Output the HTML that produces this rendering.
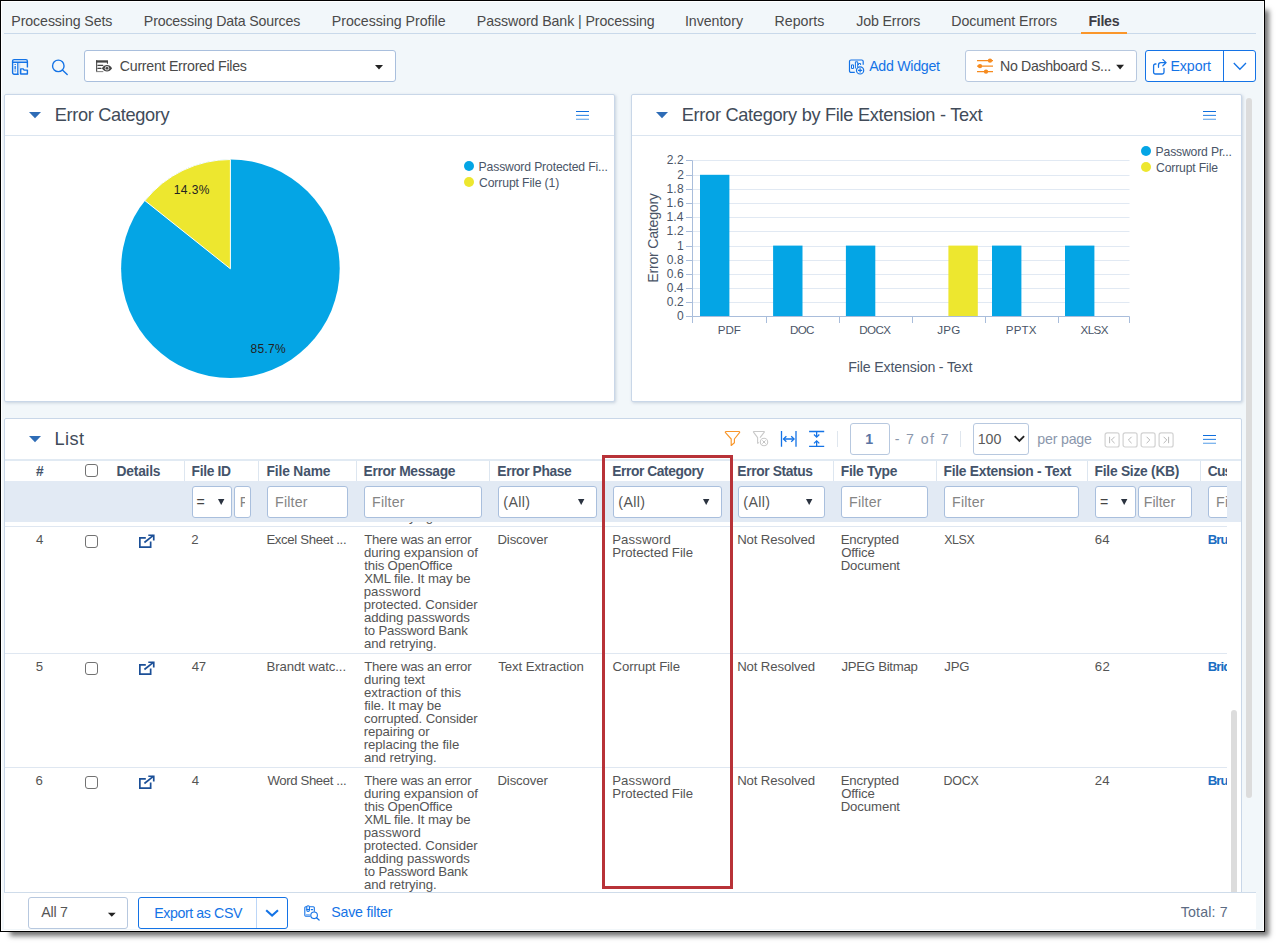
<!DOCTYPE html>
<html lang="en"><head><meta charset="utf-8"><title>Files</title>
<style>
html,body{margin:0;padding:0;background:#fff}
body{width:1280px;height:947px;position:relative;overflow:hidden;font-family:"Liberation Sans",Arial,sans-serif}
#frame{position:absolute;left:0;top:0;width:1263px;height:930px;border:1px solid #000;background:#fff;box-shadow:7px 7px 5px -3px rgba(0,0,0,.55)}
#app{position:absolute;left:1px;top:1px;width:1261px;height:928px;background:#f2f7fa;overflow:hidden}
#pg{position:absolute;left:-2px;top:-2px;width:1280px;height:947px}
.t{position:absolute;white-space:nowrap;display:block;line-height:20px}
.b{position:absolute;box-sizing:border-box;display:block}
.clip{position:absolute;overflow:hidden}
</style></head><body>
<div id="frame"><div id="app"><div id="pg">
<div class="b" style="left:4px;top:33px;width:1252px;height:1px;background:#c9d9ea"></div>
<span class="t " style="left:11.34px;top:11px;font-size:14.2px;color:#4a4a4a;letter-spacing:-0.102px;">Processing Sets</span>
<span class="t " style="left:143.84px;top:11px;font-size:14.2px;color:#4a4a4a;letter-spacing:-0.161px;">Processing Data Sources</span>
<span class="t " style="left:331.84px;top:11px;font-size:14.2px;color:#4a4a4a;letter-spacing:-0.038px;">Processing Profile</span>
<span class="t " style="left:476.84px;top:11px;font-size:14.2px;color:#4a4a4a;letter-spacing:-0.096px;">Password Bank | Processing</span>
<span class="t " style="left:684.94px;top:11px;font-size:14.2px;color:#4a4a4a;letter-spacing:-0.040px;">Inventory</span>
<span class="t " style="left:774.59px;top:11px;font-size:14.2px;color:#4a4a4a;letter-spacing:-0.006px;">Reports</span>
<span class="t " style="left:856.29px;top:11px;font-size:14.2px;color:#4a4a4a;letter-spacing:-0.141px;">Job Errors</span>
<span class="t " style="left:951.34px;top:11px;font-size:14.2px;color:#4a4a4a;letter-spacing:-0.100px;">Document Errors</span>
<span class="t " style="left:1088.56px;top:11px;font-size:14.2px;color:#3d3d45;font-weight:700;letter-spacing:-0.339px;">Files</span>
<div class="b" style="left:1081px;top:32px;width:46px;height:2px;background:#fa962a"></div>
<svg class="b" style="left:11px;top:58px;" width="18" height="18" viewBox="0 0 18 18"><g fill="none" stroke="#1473e6" stroke-width="1.400">
<path d="M7.700 16.250H3.100a1.500 1.500 0 0 1-1.500-1.500V3.150a1.500 1.500 0 0 1 1.500-1.500H14.900a1.500 1.500 0 0 1 1.500 1.500V9.600"/>
<path d="M1.600 4.300H16.400M6.900 4.300V16.250"/>
<rect x="7.600" y="5" width="1.800" height="11" fill="#cfe0f6" stroke="none"/>
<path d="M4.200 5.900v1M4.200 8v3.400M4.200 12.400v1" stroke-width="1.500" stroke="#3b89ea"/>
<path d="M9.700 16.050V10.900h2.500l.9 1.200h3.300v3.950z" fill="#f2f7fa" stroke-linejoin="round"/></g></svg>
<svg class="b" style="left:51px;top:58px;" width="18" height="18" viewBox="0 0 18 18"><g fill="none" stroke="#1473e6" stroke-width="1.400" stroke-linecap="round"><circle cx="7.300" cy="7.900" r="5.750"/><path d="M11.400 12l4.800 4.500"/></g></svg>
<div class="b" style="left:84px;top:50px;width:312px;height:32px;background:#fff;border:1px solid #a9bfdd;border-radius:3px"></div>
<svg class="b" style="left:95px;top:59px;" width="19" height="15" viewBox="0 0 19 15"><g fill="none" stroke="#444" stroke-width="1.100">
<path d="M1.100 2.450H13" stroke-width="2.300"/><path d="M12.450 2.400V4.700"/>
<path d="M1.650 1.300V12.900"/><path d="M1.100 12.600H8.300" stroke="#8a8a8a"/>
<path d="M2.900 6.400H7.800M2.900 9.400H6" stroke-linecap="round"/>
<path d="M6.900 9.300C8.400 7.100 10 6 12 6s3.600 1.100 5.100 3.300C15.600 11.500 14 12.600 12 12.600S8.400 11.500 6.900 9.300z" fill="#444" stroke="none"/>
<circle cx="12" cy="9.300" r="2.300" fill="#d8d8d8" stroke="none"/><circle cx="12" cy="9.300" r="1.300" fill="#444" stroke="none"/></g></svg>
<span class="t " style="left:119.79px;top:56px;font-size:14.2px;color:#4a4a4a;letter-spacing:-0.267px;">Current Errored Files</span>
<svg class="b" style="left:374px;top:64px;" width="10" height="6" viewBox="0 0 10 6"><path d="M1 1h8L5 5.600z" fill="#222"/></svg>
<svg class="b" style="left:848px;top:58px;" width="18" height="18" viewBox="0 0 18 18"><g fill="none" stroke="#1473e6" stroke-width="1.200">
<path d="M6.800 14.400H3A1.500 1.500 0 0 1 1.500 12.900V3.500A1.500 1.500 0 0 1 3 2H13.700A1.500 1.500 0 0 1 15.200 3.500V6.800"/>
<path d="M3.500 10.500V6.900h2v3.600zM7.400 10.500V3.800h2.300v5.400M10.500 7V5.500h2.100V7" stroke-width="1"/>
<circle cx="12.100" cy="12.400" r="3.600" fill="#f2f7fa"/><path d="M12.100 10.300v4.200M10 12.400h4.200"/></g></svg>
<span class="t " style="left:869.17px;top:56px;font-size:14.2px;color:#1473e6;letter-spacing:-0.276px;">Add Widget</span>
<div class="b" style="left:965px;top:50px;width:172px;height:32px;background:#fff;border:1px solid #b7c8df;border-radius:3px"></div>
<svg class="b" style="left:976px;top:57px;" width="18" height="18" viewBox="0 0 18 18"><g stroke="#f68b1f" stroke-width="1.300" fill="#f68b1f"><path d="M1 3.600h16M1 9.100h16M1 14.600h16"/>
<circle cx="14" cy="3.600" r="2.200" stroke="none"/><circle cx="4" cy="9.100" r="2.200" stroke="none"/><circle cx="10" cy="14.600" r="2.200" stroke="none"/></g></svg>
<span class="t " style="left:1000.04px;top:56px;font-size:14.2px;color:#4a4a4a;letter-spacing:-0.348px;">No Dashboard S...</span>
<svg class="b" style="left:1115px;top:64px;" width="10" height="6" viewBox="0 0 10 6"><path d="M1.200 0.800h7.800L5.100 5.500z" fill="#222"/></svg>
<div class="b" style="left:1145px;top:50px;width:111px;height:32px;background:#fff;border:1px solid #1473e6;border-radius:3px"></div>
<div class="b" style="left:1223px;top:50px;width:1px;height:32px;background:#1473e6"></div>
<svg class="b" style="left:1151px;top:58px;" width="17" height="18" viewBox="0 0 17 18"><g fill="none" stroke="#1473e6" stroke-width="1.300" stroke-linecap="round" stroke-linejoin="round">
<path d="M5 6H4.400A1.800 1.800 0 0 0 2.600 7.800V14.200A1.800 1.800 0 0 0 4.400 16H11.200A1.800 1.800 0 0 0 13 14.200V10.400"/>
<path d="M7.500 9.300V7A2.400 2.400 0 0 1 9.900 4.600H14.800M11.900 1.600l3.200 3-3.200 3.100"/></g></svg>
<span class="t " style="left:1170.44px;top:56px;font-size:14.2px;color:#1473e6;letter-spacing:-0.075px;">Export</span>
<svg class="b" style="left:1232px;top:61px;" width="16" height="10" viewBox="0 0 16 10"><path d="M1.800 2l6.100 6.300L14 2" fill="none" stroke="#1473e6" stroke-width="1.300"/></svg>
<div class="b" style="left:4px;top:94px;width:611px;height:308px;background:#fff;border:1px solid #c9d7e8;border-radius:2px;box-shadow:1px 1px 3px rgba(120,140,170,.35)"></div>
<div class="b" style="left:631px;top:94px;width:611px;height:308px;background:#fff;border:1px solid #c9d7e8;border-radius:2px;box-shadow:1px 1px 3px rgba(120,140,170,.35)"></div>
<div class="b" style="left:5px;top:135px;width:609px;height:1px;background:#dbe5f0"></div>
<div class="b" style="left:632px;top:135px;width:609px;height:1px;background:#dbe5f0"></div>
<svg class="b" style="left:29px;top:112px;" width="12" height="7" viewBox="0 0 12 7"><path d="M0 0h12L6 6.200z" fill="#2e6cb6"/></svg>
<svg class="b" style="left:656px;top:112px;" width="12" height="7" viewBox="0 0 12 7"><path d="M0 0h12L6 6.200z" fill="#2e6cb6"/></svg>
<span class="t " style="left:54.71px;top:105px;font-size:18.2px;color:#414b59;letter-spacing:-0.333px;">Error Category</span>
<span class="t " style="left:681.71px;top:105px;font-size:18.2px;color:#414b59;letter-spacing:-0.292px;">Error Category by File Extension - Text</span>
<svg class="b" style="left:576px;top:111px;" width="13" height="9" viewBox="0 0 13 9"><g shape-rendering="crispEdges"><rect x="0" y="0" width="13" height="1" fill="#0f6edd"/><rect x="0" y="3" width="13" height="1" fill="#e3eefb"/><rect x="0" y="4" width="13" height="1" fill="#3f8fe6"/><rect x="0" y="7" width="13" height="1" fill="#d3e5f8"/><rect x="0" y="8" width="13" height="1" fill="#7fb6ee"/></g></svg>
<svg class="b" style="left:1203px;top:111px;" width="13" height="9" viewBox="0 0 13 9"><g shape-rendering="crispEdges"><rect x="0" y="0" width="13" height="1" fill="#0f6edd"/><rect x="0" y="3" width="13" height="1" fill="#e3eefb"/><rect x="0" y="4" width="13" height="1" fill="#3f8fe6"/><rect x="0" y="7" width="13" height="1" fill="#d3e5f8"/><rect x="0" y="8" width="13" height="1" fill="#7fb6ee"/></g></svg>
<svg class="b" style="left:0;top:0" width="620" height="410" viewBox="0 0 620 410"><circle cx="230.4" cy="268.8" r="109.3" fill="#04a5e5"/><path d="M230.4 268.8L230.4 159.5A109.3 109.3 0 0 0 144.95 200.65Z" fill="#ede72f" stroke="#fff" stroke-width="1" stroke-linejoin="round"/></svg>
<span class="t " style="left:173.79px;top:180px;font-size:12px;color:#222;letter-spacing:0.403px;">14.3%</span>
<span class="t " style="left:250.48px;top:339px;font-size:12px;color:#222;letter-spacing:0.304px;">85.7%</span>
<div class="b" style="left:464px;top:161px;width:10px;height:10px;background:#04a5e5;border-radius:50%"></div>
<div class="b" style="left:464px;top:177px;width:10px;height:10px;background:#ede72f;border-radius:50%"></div>
<span class="t " style="left:478.60px;top:157px;font-size:12.2px;color:#4a5567;letter-spacing:-0.151px;">Password Protected Fi...</span>
<span class="t " style="left:478.99px;top:173px;font-size:12.2px;color:#4a5567;letter-spacing:-0.111px;">Corrupt File (1)</span>
<svg class="b" style="left:0;top:0" width="1245" height="410" viewBox="0 0 1245 410"><path d="M692.5 302.5H1129.5" stroke="#e1e9f3" stroke-width="1"/><path d="M692.5 288.5H1129.5" stroke="#e1e9f3" stroke-width="1"/><path d="M692.5 274.5H1129.5" stroke="#e1e9f3" stroke-width="1"/><path d="M692.5 260.5H1129.5" stroke="#e1e9f3" stroke-width="1"/><path d="M692.5 246.5H1129.5" stroke="#e1e9f3" stroke-width="1"/><path d="M692.5 231.5H1129.5" stroke="#e1e9f3" stroke-width="1"/><path d="M692.5 217.5H1129.5" stroke="#e1e9f3" stroke-width="1"/><path d="M692.5 203.5H1129.5" stroke="#e1e9f3" stroke-width="1"/><path d="M692.5 189.5H1129.5" stroke="#e1e9f3" stroke-width="1"/><path d="M692.5 175.5H1129.5" stroke="#e1e9f3" stroke-width="1"/><path d="M692.5 160.5H1129.5" stroke="#e1e9f3" stroke-width="1"/><rect x="700.00" y="174.8" width="29.4" height="141.40" fill="#04a5e5"/><rect x="773.10" y="245.6" width="29.4" height="70.60" fill="#04a5e5"/><rect x="845.90" y="245.6" width="29.4" height="70.60" fill="#04a5e5"/><rect x="948.40" y="245.6" width="29.4" height="70.60" fill="#ede72f"/><rect x="992.00" y="245.6" width="29.4" height="70.60" fill="#04a5e5"/><rect x="1065.00" y="245.6" width="29.4" height="70.60" fill="#04a5e5"/><path d="M692.5 160.5V316.5H1129.5" fill="none" stroke="#a9bddb" stroke-width="1"/><path d="M686.0 316.5H692.5" stroke="#a9bddb" stroke-width="1"/><path d="M686.0 302.5H692.5" stroke="#a9bddb" stroke-width="1"/><path d="M686.0 288.5H692.5" stroke="#a9bddb" stroke-width="1"/><path d="M686.0 274.5H692.5" stroke="#a9bddb" stroke-width="1"/><path d="M686.0 260.5H692.5" stroke="#a9bddb" stroke-width="1"/><path d="M686.0 246.5H692.5" stroke="#a9bddb" stroke-width="1"/><path d="M686.0 231.5H692.5" stroke="#a9bddb" stroke-width="1"/><path d="M686.0 217.5H692.5" stroke="#a9bddb" stroke-width="1"/><path d="M686.0 203.5H692.5" stroke="#a9bddb" stroke-width="1"/><path d="M686.0 189.5H692.5" stroke="#a9bddb" stroke-width="1"/><path d="M686.0 175.5H692.5" stroke="#a9bddb" stroke-width="1"/><path d="M686.0 160.5H692.5" stroke="#a9bddb" stroke-width="1"/><path d="M692.50 316.5V323.0" stroke="#a9bddb" stroke-width="1"/><path d="M766.50 316.5V323.0" stroke="#a9bddb" stroke-width="1"/><path d="M839.50 316.5V323.0" stroke="#a9bddb" stroke-width="1"/><path d="M912.50 316.5V323.0" stroke="#a9bddb" stroke-width="1"/><path d="M985.50 316.5V323.0" stroke="#a9bddb" stroke-width="1"/><path d="M1058.50 316.5V323.0" stroke="#a9bddb" stroke-width="1"/><path d="M1129.50 316.5V323.0" stroke="#a9bddb" stroke-width="1"/></svg>
<span class="t " style="left:676.98px;top:306px;font-size:12px;color:#4a5567;">0</span>
<span class="t " style="left:666.83px;top:292px;font-size:12px;color:#4a5567;letter-spacing:0.144px;">0.2</span>
<span class="t " style="left:666.83px;top:278px;font-size:12px;color:#4a5567;letter-spacing:0.018px;">0.4</span>
<span class="t " style="left:666.83px;top:264px;font-size:12px;color:#4a5567;letter-spacing:0.102px;">0.6</span>
<span class="t " style="left:666.83px;top:250px;font-size:12px;color:#4a5567;letter-spacing:0.102px;">0.8</span>
<span class="t " style="left:677.10px;top:236px;font-size:12px;color:#4a5567;">1</span>
<span class="t " style="left:666.39px;top:221px;font-size:12px;color:#4a5567;letter-spacing:0.366px;">1.2</span>
<span class="t " style="left:666.39px;top:207px;font-size:12px;color:#4a5567;letter-spacing:0.240px;">1.4</span>
<span class="t " style="left:666.39px;top:193px;font-size:12px;color:#4a5567;letter-spacing:0.324px;">1.6</span>
<span class="t " style="left:666.39px;top:179px;font-size:12px;color:#4a5567;letter-spacing:0.324px;">1.8</span>
<span class="t " style="left:677.13px;top:165px;font-size:12px;color:#4a5567;">2</span>
<span class="t " style="left:666.70px;top:150px;font-size:12px;color:#4a5567;letter-spacing:0.210px;">2.2</span>
<span class="t " style="left:717.85px;top:320px;font-size:11.6px;color:#4a5567;letter-spacing:-0.092px;">PDF</span>
<span class="t " style="left:790.05px;top:320px;font-size:11.6px;color:#4a5567;letter-spacing:-0.697px;">DOC</span>
<span class="t " style="left:859.17px;top:320px;font-size:11.6px;color:#4a5567;letter-spacing:-0.523px;">DOCX</span>
<span class="t " style="left:937.33px;top:320px;font-size:11.6px;color:#4a5567;letter-spacing:0.235px;">JPG</span>
<span class="t " style="left:1005.80px;top:320px;font-size:11.6px;color:#4a5567;letter-spacing:0.132px;">PPTX</span>
<span class="t " style="left:1080.49px;top:320px;font-size:11.6px;color:#4a5567;letter-spacing:-0.554px;">XLSX</span>
<span class="t " style="left:848.34px;top:357px;font-size:14.2px;color:#4a5567;letter-spacing:-0.167px;">File Extension - Text</span>
<span class="t" style="left:652.8px;top:237.6px;font-size:14.2px;line-height:14.2px;color:#4a5567;letter-spacing:-0.263px;transform:translate(-50%,-50%) rotate(-90deg);transform-origin:50% 50%">Error Category</span>
<div class="b" style="left:1141px;top:146px;width:10px;height:10px;background:#04a5e5;border-radius:50%"></div>
<div class="b" style="left:1141px;top:162px;width:10px;height:10px;background:#ede72f;border-radius:50%"></div>
<span class="t " style="left:1155.60px;top:142px;font-size:12.2px;color:#4a5567;letter-spacing:-0.173px;">Password Pr...</span>
<span class="t " style="left:1155.99px;top:158px;font-size:12.2px;color:#4a5567;letter-spacing:-0.153px;">Corrupt File</span>
<div class="b" style="left:4px;top:418px;width:1238px;height:475px;background:#fff;border:1px solid #c9d7e8;border-radius:2px 2px 0 0"></div>
<svg class="b" style="left:29px;top:436px;" width="12" height="7" viewBox="0 0 12 7"><path d="M0 0h12L6 6.200z" fill="#2e6cb6"/></svg>
<span class="t " style="left:54.51px;top:429px;font-size:18.2px;color:#414b59;letter-spacing:0.434px;">List</span>
<svg class="b" style="left:723px;top:429px;" width="19" height="18" viewBox="0 0 19 18"><path d="M3 2.500H16A.7.700 0 0 1 16.500 3.700L11.400 10V13.700L8.200 16.500V10L2.500 3.700A.7.700 0 0 1 3 2.500Z" fill="none" stroke="#f8962a" stroke-width="1.150" stroke-linejoin="round"/></svg>
<svg class="b" style="left:751px;top:429px;" width="19" height="18" viewBox="0 0 19 18"><g fill="none" stroke="#c9c9c9" stroke-width="1.100" stroke-linejoin="round"><path d="M9 8.600L13.300 3.200A.45.450 0 0 0 13 2.500H2.800A.45.450 0 0 0 2.500 3.200L6.600 8.600V14.300L7.800 13.500"/>
<circle cx="13" cy="13" r="3.700" fill="#fff"/><path d="M11.400 11.400l3.200 3.200M14.600 11.400l-3.200 3.200" stroke-width=".9" stroke="#bdbdbd"/></g></svg>
<svg class="b" style="left:779px;top:429px;" width="19" height="19" viewBox="0 0 19 19"><g fill="none" stroke="#1473e6" stroke-width="1.300"><path d="M2.500 2V17.700M17 2V17.700M4.800 10H14.800"/><path d="M7.400 7.200L4.500 10l2.900 2.800M12.200 7.200l2.900 2.800-2.900 2.800"/></g></svg>
<svg class="b" style="left:808px;top:429px;" width="18" height="19" viewBox="0 0 18 19"><g fill="none" stroke="#1473e6" stroke-width="1.300"><path d="M1.100 2.500H16.200M1.100 17.400H16.200M8.650 2.500V7.800M8.650 17.400V12.100"/><path d="M6 5.500l2.650 2.600L11.300 5.500M6 14.400l2.650-2.600 2.650 2.600"/></g></svg>
<div class="b" style="left:837px;top:431px;width:1px;height:16px;background:#dfe6ee"></div>
<div class="b" style="left:850px;top:423px;width:40px;height:32px;background:#fff;border:1px solid #b7c8df;border-radius:3px"></div>
<span class="t " style="left:865.30px;top:429px;font-size:14.2px;color:#5a73a3;font-weight:700;">1</span>
<span class="t " style="left:894.68px;top:429px;font-size:14.2px;color:#8b97ac;letter-spacing:1.390px;">- 7 of 7</span>
<div class="b" style="left:960px;top:431px;width:1px;height:16px;background:#dfe6ee"></div>
<div class="b" style="left:973px;top:423px;width:56px;height:32px;background:#fff;border:1px solid #b7c8df;border-radius:3px"></div>
<span class="t " style="left:977.72px;top:429px;font-size:14.2px;color:#5a5a5a;letter-spacing:-0.033px;">100</span>
<svg class="b" style="left:1013px;top:434px;" width="13" height="10" viewBox="0 0 13 10"><path d="M1.700 2.200l4.700 4.700 4.700-4.700" fill="none" stroke="#222" stroke-width="1.900"/></svg>
<span class="t " style="left:1037.29px;top:429px;font-size:14.2px;color:#8b97ac;letter-spacing:-0.190px;">per page</span>
<svg class="b" style="left:1104px;top:432px;" width="16" height="16" viewBox="0 0 16 16"><rect x="1.100" y=".9" width="14" height="14.100" rx="2" fill="#fff" stroke="#d2d2d2" stroke-width="1.200"/><g fill="none" stroke="#b9b9b9" stroke-width="1" transform="translate(.6,.5)"><path d="M5 4.300V10.700M10 4.300L6.800 7.500l3.200 3.200"/></g></svg>
<svg class="b" style="left:1122px;top:432px;" width="16" height="16" viewBox="0 0 16 16"><rect x="1.100" y=".9" width="14" height="14.100" rx="2" fill="#fff" stroke="#d2d2d2" stroke-width="1.200"/><g fill="none" stroke="#b9b9b9" stroke-width="1" transform="translate(.6,.5)"><path d="M9 4.300L5.800 7.500 9 10.700"/></g></svg>
<svg class="b" style="left:1140px;top:432px;" width="16" height="16" viewBox="0 0 16 16"><rect x="1.100" y=".9" width="14" height="14.100" rx="2" fill="#fff" stroke="#d2d2d2" stroke-width="1.200"/><g fill="none" stroke="#b9b9b9" stroke-width="1" transform="translate(.6,.5)"><path d="M6 4.300l3.200 3.200L6 10.700"/></g></svg>
<svg class="b" style="left:1158px;top:432px;" width="16" height="16" viewBox="0 0 16 16"><rect x="1.100" y=".9" width="14" height="14.100" rx="2" fill="#fff" stroke="#d2d2d2" stroke-width="1.200"/><g fill="none" stroke="#b9b9b9" stroke-width="1" transform="translate(.6,.5)"><path d="M10 4.300V10.700M5 4.300l3.200 3.200L5 10.700"/></g></svg>
<svg class="b" style="left:1203px;top:435px;" width="13" height="9" viewBox="0 0 13 9"><g shape-rendering="crispEdges"><rect x="0" y="0" width="13" height="1" fill="#0f6edd"/><rect x="0" y="3" width="13" height="1" fill="#e3eefb"/><rect x="0" y="4" width="13" height="1" fill="#3f8fe6"/><rect x="0" y="7" width="13" height="1" fill="#d3e5f8"/><rect x="0" y="8" width="13" height="1" fill="#7fb6ee"/></g></svg>
<div class="b" style="left:5px;top:459px;width:1236px;height:2px;background:#e1eaf3"></div>
<div class="clip" style="left:5px;top:461px;width:1222px;height:61px">
<span class="t " style="left:31.02px;top:1px;font-size:13.8px;color:#44536a;font-weight:700;">#</span>
<div class="b" style="left:80px;top:3px;width:13px;height:13px;background:#fff;border:1px solid #727272;border-radius:3px"></div>
<span class="t " style="left:111.59px;top:1px;font-size:13.8px;color:#44536a;font-weight:700;letter-spacing:-0.215px;">Details</span>
<span class="t " style="left:186.59px;top:1px;font-size:13.8px;color:#44536a;font-weight:700;letter-spacing:-0.321px;">File ID</span>
<span class="t " style="left:261.59px;top:1px;font-size:13.8px;color:#44536a;font-weight:700;letter-spacing:-0.164px;">File Name</span>
<span class="t " style="left:358.59px;top:1px;font-size:13.8px;color:#44536a;font-weight:700;letter-spacing:-0.334px;">Error Message</span>
<span class="t " style="left:492.34px;top:1px;font-size:13.8px;color:#44536a;font-weight:700;letter-spacing:-0.385px;">Error Phase</span>
<span class="t " style="left:607.34px;top:1px;font-size:13.8px;color:#44536a;font-weight:700;letter-spacing:-0.435px;">Error Category</span>
<span class="t " style="left:732.34px;top:1px;font-size:13.8px;color:#44536a;font-weight:700;letter-spacing:-0.367px;">Error Status</span>
<span class="t " style="left:835.84px;top:1px;font-size:13.8px;color:#44536a;font-weight:700;letter-spacing:-0.270px;">File Type</span>
<span class="t " style="left:938.59px;top:1px;font-size:13.8px;color:#44536a;font-weight:700;letter-spacing:-0.267px;">File Extension - Text</span>
<span class="t " style="left:1089.59px;top:1px;font-size:13.8px;color:#44536a;font-weight:700;letter-spacing:-0.257px;">File Size (KB)</span>
<span class="t " style="left:1202.68px;top:1px;font-size:13.8px;color:#44536a;font-weight:700;letter-spacing:-0.756px;">Custodian</span>
<div class="b" style="left:178.5px;top:0px;width:1px;height:21px;background:#dde6f0"></div>
<div class="b" style="left:253px;top:0px;width:1px;height:21px;background:#dde6f0"></div>
<div class="b" style="left:350.5px;top:0px;width:1px;height:21px;background:#dde6f0"></div>
<div class="b" style="left:484.25px;top:0px;width:1px;height:21px;background:#dde6f0"></div>
<div class="b" style="left:599px;top:0px;width:1px;height:21px;background:#dde6f0"></div>
<div class="b" style="left:725px;top:0px;width:1px;height:21px;background:#dde6f0"></div>
<div class="b" style="left:827.5px;top:0px;width:1px;height:21px;background:#dde6f0"></div>
<div class="b" style="left:930.5px;top:0px;width:1px;height:21px;background:#dde6f0"></div>
<div class="b" style="left:1081.75px;top:0px;width:1px;height:21px;background:#dde6f0"></div>
<div class="b" style="left:1194.5px;top:0px;width:1px;height:21px;background:#dde6f0"></div>
</div>
<div class="b" style="left:5px;top:481px;width:1236px;height:41px;background:#e2eaf4"></div>
<div class="clip" style="left:5px;top:481px;width:1222px;height:41px">
<div class="b" style="left:187px;top:5px;width:40px;height:32px;background:#fff;border:1px solid #a9bfdd;border-radius:3px"></div>
<span class="t " style="left:191.62px;top:11px;font-size:14.2px;color:#444;">=</span>
<svg class="b" style="left:213px;top:17.80000000000001px;" width="7" height="6" viewBox="0 0 7 6"><path d="M0 0h6.400L3.200 6z" fill="#2b3340"/></svg>
<div class="b" style="left:229px;top:5px;width:17px;height:32px;background:#fff;border:1px solid #a9bfdd;border-radius:3px"></div>
<div class="clip" style="left:234.500px;top:8px;width:5.700px;height:24px">
<span class="t " style="left:0.24px;top:3px;font-size:14.2px;color:#858585;">F</span>
</div>
<div class="b" style="left:262px;top:5px;width:81px;height:32px;background:#fff;border:1px solid #a9bfdd;border-radius:3px"></div>
<span class="t " style="left:270.09px;top:11px;font-size:14.2px;color:#858585;letter-spacing:0.168px;">Filter</span>
<div class="b" style="left:359px;top:5px;width:118px;height:32px;background:#fff;border:1px solid #a9bfdd;border-radius:3px"></div>
<span class="t " style="left:367.09px;top:11px;font-size:14.2px;color:#858585;letter-spacing:0.168px;">Filter</span>
<div class="b" style="left:493px;top:5px;width:99px;height:32px;background:#fff;border:1px solid #a9bfdd;border-radius:3px"></div>
<span class="t " style="left:498.32px;top:11px;font-size:14.2px;color:#555;letter-spacing:0.382px;">(All)</span>
<svg class="b" style="left:573px;top:17.80000000000001px;" width="7" height="6" viewBox="0 0 7 6"><path d="M0 0h6.400L3.200 6z" fill="#2b3340"/></svg>
<div class="b" style="left:608px;top:5px;width:109px;height:32px;background:#fff;border:1px solid #a9bfdd;border-radius:3px"></div>
<span class="t " style="left:613.32px;top:11px;font-size:14.2px;color:#555;letter-spacing:0.382px;">(All)</span>
<svg class="b" style="left:698px;top:17.80000000000001px;" width="7" height="6" viewBox="0 0 7 6"><path d="M0 0h6.400L3.200 6z" fill="#2b3340"/></svg>
<div class="b" style="left:733px;top:5px;width:86.5px;height:32px;background:#fff;border:1px solid #a9bfdd;border-radius:3px"></div>
<span class="t " style="left:738.32px;top:11px;font-size:14.2px;color:#555;letter-spacing:0.382px;">(All)</span>
<svg class="b" style="left:800.5px;top:17.80000000000001px;" width="7" height="6" viewBox="0 0 7 6"><path d="M0 0h6.400L3.200 6z" fill="#2b3340"/></svg>
<div class="b" style="left:836px;top:5px;width:87px;height:32px;background:#fff;border:1px solid #a9bfdd;border-radius:3px"></div>
<span class="t " style="left:844.09px;top:11px;font-size:14.2px;color:#858585;letter-spacing:0.168px;">Filter</span>
<div class="b" style="left:939px;top:5px;width:135px;height:32px;background:#fff;border:1px solid #a9bfdd;border-radius:3px"></div>
<span class="t " style="left:947.09px;top:11px;font-size:14.2px;color:#858585;letter-spacing:0.168px;">Filter</span>
<div class="b" style="left:1090px;top:5px;width:40.5px;height:32px;background:#fff;border:1px solid #a9bfdd;border-radius:3px"></div>
<span class="t " style="left:1095.02px;top:11px;font-size:14.2px;color:#444;">=</span>
<svg class="b" style="left:1116.3px;top:17.80000000000001px;" width="7" height="6" viewBox="0 0 7 6"><path d="M0 0h6.400L3.200 6z" fill="#2b3340"/></svg>
<div class="b" style="left:1133px;top:5px;width:54px;height:32px;background:#fff;border:1px solid #a9bfdd;border-radius:3px"></div>
<span class="t " style="left:1138.84px;top:11px;font-size:14.2px;color:#858585;letter-spacing:-0.032px;">Filter</span>
<div class="b" style="left:1203px;top:5px;width:82px;height:32px;background:#fff;border:1px solid #a9bfdd;border-radius:3px"></div>
<span class="t " style="left:1211.09px;top:11px;font-size:14.2px;color:#858585;letter-spacing:0.168px;">Filter</span>
</div>
<div class="clip" style="left:5px;top:522px;width:1222px;height:370px">
<span class="t " style="left:358.95px;top:-15px;font-size:13.2px;color:#545454;letter-spacing:-0.052px;">and retrying.</span>
<div class="b" style="left:0px;top:4px;width:1222px;height:1px;background:#dfe7f1"></div>
<span class="t " style="left:30.96px;top:8px;font-size:13.2px;color:#545454;">4</span>
<div class="b" style="left:80px;top:13px;width:13px;height:13px;background:#fff;border:1px solid #727272;border-radius:3px"></div>
<svg class="b" style="left:133px;top:12.200000000000045px;" width="17" height="15" viewBox="0 0 17 15"><g fill="none" stroke="#1b4f97" stroke-width="1.700"><path d="M7.800 3.900H1.850V13.150H12.650V7.600"/><path d="M6.400 8.500L15.300 1.400"/><path d="M10.300 1.250H15.750V6.400"/></g></svg>
<span class="t " style="left:186.34px;top:8px;font-size:13.2px;color:#545454;">2</span>
<span class="t " style="left:261.42px;top:8px;font-size:13.2px;color:#545454;letter-spacing:-0.345px;">Excel Sheet ...</span>
<span class="t " style="left:359.21px;top:8px;font-size:13.2px;color:#545454;letter-spacing:-0.236px;">There was an error</span>
<span class="t " style="left:358.95px;top:21px;font-size:13.2px;color:#545454;letter-spacing:-0.066px;">during expansion of</span>
<span class="t " style="left:359.30px;top:34px;font-size:13.2px;color:#545454;letter-spacing:-0.176px;">this OpenOffice</span>
<span class="t " style="left:359.21px;top:47px;font-size:13.2px;color:#545454;letter-spacing:-0.136px;">XML file. It may be</span>
<span class="t " style="left:358.66px;top:60px;font-size:13.2px;color:#545454;letter-spacing:0.099px;">password</span>
<span class="t " style="left:358.66px;top:73px;font-size:13.2px;color:#545454;letter-spacing:-0.063px;">protected. Consider</span>
<span class="t " style="left:358.95px;top:86px;font-size:13.2px;color:#545454;letter-spacing:-0.025px;">adding passwords</span>
<span class="t " style="left:359.30px;top:99px;font-size:13.2px;color:#545454;letter-spacing:-0.181px;">to Password Bank</span>
<span class="t " style="left:358.95px;top:112px;font-size:13.2px;color:#545454;letter-spacing:-0.052px;">and retrying.</span>
<span class="t " style="left:492.42px;top:8px;font-size:13.2px;color:#545454;letter-spacing:-0.115px;">Discover</span>
<span class="t " style="left:607.17px;top:8px;font-size:13.2px;color:#545454;letter-spacing:0.102px;">Password</span>
<span class="t " style="left:607.17px;top:21px;font-size:13.2px;color:#545454;letter-spacing:-0.040px;">Protected File</span>
<span class="t " style="left:732.17px;top:8px;font-size:13.2px;color:#545454;letter-spacing:-0.119px;">Not Resolved</span>
<span class="t " style="left:835.67px;top:8px;font-size:13.2px;color:#545454;letter-spacing:-0.125px;">Encrypted</span>
<span class="t " style="left:836.13px;top:21px;font-size:13.2px;color:#545454;letter-spacing:-0.108px;">Office</span>
<span class="t " style="left:835.67px;top:34px;font-size:13.2px;color:#545454;letter-spacing:-0.106px;">Document</span>
<span class="t " style="left:939.23px;top:8px;font-size:12.4px;color:#545454;letter-spacing:-0.391px;">XLSX</span>
<span class="t " style="left:1089.84px;top:8px;font-size:13.2px;color:#545454;letter-spacing:0.164px;">64</span>
<span class="t " style="left:1202.83px;top:8px;font-size:13.2px;color:#1a6dc2;font-weight:700;letter-spacing:-1.000px;">Bruce</span>
<div class="b" style="left:0px;top:131px;width:1222px;height:1px;background:#dfe7f1"></div>
<span class="t " style="left:30.72px;top:135px;font-size:13.2px;color:#545454;">5</span>
<div class="b" style="left:80px;top:140px;width:13px;height:13px;background:#fff;border:1px solid #727272;border-radius:3px"></div>
<svg class="b" style="left:133px;top:139.20000000000005px;" width="17" height="15" viewBox="0 0 17 15"><g fill="none" stroke="#1b4f97" stroke-width="1.700"><path d="M7.800 3.900H1.850V13.150H12.650V7.600"/><path d="M6.400 8.500L15.300 1.400"/><path d="M10.300 1.250H15.750V6.400"/></g></svg>
<span class="t " style="left:186.71px;top:135px;font-size:13.2px;color:#545454;letter-spacing:-0.228px;">47</span>
<span class="t " style="left:261.42px;top:135px;font-size:13.2px;color:#545454;letter-spacing:-0.071px;">Brandt watc...</span>
<span class="t " style="left:359.21px;top:135px;font-size:13.2px;color:#545454;letter-spacing:-0.236px;">There was an error</span>
<span class="t " style="left:358.95px;top:148px;font-size:13.2px;color:#545454;letter-spacing:-0.050px;">during text</span>
<span class="t " style="left:358.95px;top:161px;font-size:13.2px;color:#545454;letter-spacing:0.069px;">extraction of this</span>
<span class="t " style="left:359.32px;top:174px;font-size:13.2px;color:#545454;letter-spacing:-0.106px;">file. It may be</span>
<span class="t " style="left:358.95px;top:187px;font-size:13.2px;color:#545454;letter-spacing:-0.120px;">corrupted. Consider</span>
<span class="t " style="left:358.63px;top:200px;font-size:13.2px;color:#545454;letter-spacing:-0.062px;">repairing or</span>
<span class="t " style="left:358.63px;top:213px;font-size:13.2px;color:#545454;letter-spacing:-0.025px;">replacing the file</span>
<span class="t " style="left:358.95px;top:226px;font-size:13.2px;color:#545454;letter-spacing:-0.052px;">and retrying.</span>
<span class="t " style="left:493.21px;top:135px;font-size:13.2px;color:#545454;letter-spacing:-0.066px;">Text Extraction</span>
<span class="t " style="left:607.59px;top:135px;font-size:13.2px;color:#545454;letter-spacing:-0.133px;">Corrupt File</span>
<span class="t " style="left:732.17px;top:135px;font-size:13.2px;color:#545454;letter-spacing:-0.119px;">Not Resolved</span>
<span class="t " style="left:836.55px;top:135px;font-size:13.2px;color:#545454;letter-spacing:-0.289px;">JPEG Bitmap</span>
<span class="t " style="left:939.30px;top:135px;font-size:13.2px;color:#545454;letter-spacing:-0.250px;">JPG</span>
<span class="t " style="left:1089.84px;top:135px;font-size:13.2px;color:#545454;letter-spacing:0.442px;">62</span>
<span class="t " style="left:1202.83px;top:135px;font-size:13.2px;color:#1a6dc2;font-weight:700;letter-spacing:-1.000px;">Bridget</span>
<div class="b" style="left:0px;top:245px;width:1222px;height:1px;background:#dfe7f1"></div>
<span class="t " style="left:30.59px;top:249px;font-size:13.2px;color:#545454;">6</span>
<div class="b" style="left:80px;top:254px;width:13px;height:13px;background:#fff;border:1px solid #727272;border-radius:3px"></div>
<svg class="b" style="left:133px;top:253.20000000000005px;" width="17" height="15" viewBox="0 0 17 15"><g fill="none" stroke="#1b4f97" stroke-width="1.700"><path d="M7.800 3.900H1.850V13.150H12.650V7.600"/><path d="M6.400 8.500L15.300 1.400"/><path d="M10.300 1.250H15.750V6.400"/></g></svg>
<span class="t " style="left:186.71px;top:249px;font-size:13.2px;color:#545454;">4</span>
<span class="t " style="left:262.45px;top:249px;font-size:13.2px;color:#545454;letter-spacing:-0.376px;">Word Sheet ...</span>
<span class="t " style="left:359.21px;top:249px;font-size:13.2px;color:#545454;letter-spacing:-0.236px;">There was an error</span>
<span class="t " style="left:358.95px;top:262px;font-size:13.2px;color:#545454;letter-spacing:-0.066px;">during expansion of</span>
<span class="t " style="left:359.30px;top:275px;font-size:13.2px;color:#545454;letter-spacing:-0.176px;">this OpenOffice</span>
<span class="t " style="left:359.21px;top:288px;font-size:13.2px;color:#545454;letter-spacing:-0.136px;">XML file. It may be</span>
<span class="t " style="left:358.66px;top:301px;font-size:13.2px;color:#545454;letter-spacing:0.099px;">password</span>
<span class="t " style="left:358.66px;top:314px;font-size:13.2px;color:#545454;letter-spacing:-0.063px;">protected. Consider</span>
<span class="t " style="left:358.95px;top:327px;font-size:13.2px;color:#545454;letter-spacing:-0.025px;">adding passwords</span>
<span class="t " style="left:359.30px;top:340px;font-size:13.2px;color:#545454;letter-spacing:-0.181px;">to Password Bank</span>
<span class="t " style="left:358.95px;top:353px;font-size:13.2px;color:#545454;letter-spacing:-0.052px;">and retrying.</span>
<span class="t " style="left:492.42px;top:249px;font-size:13.2px;color:#545454;letter-spacing:-0.115px;">Discover</span>
<span class="t " style="left:607.17px;top:249px;font-size:13.2px;color:#545454;letter-spacing:0.102px;">Password</span>
<span class="t " style="left:607.17px;top:262px;font-size:13.2px;color:#545454;letter-spacing:-0.040px;">Protected File</span>
<span class="t " style="left:732.17px;top:249px;font-size:13.2px;color:#545454;letter-spacing:-0.119px;">Not Resolved</span>
<span class="t " style="left:835.67px;top:249px;font-size:13.2px;color:#545454;letter-spacing:-0.125px;">Encrypted</span>
<span class="t " style="left:836.13px;top:262px;font-size:13.2px;color:#545454;letter-spacing:-0.108px;">Office</span>
<span class="t " style="left:835.67px;top:275px;font-size:13.2px;color:#545454;letter-spacing:-0.106px;">Document</span>
<span class="t " style="left:938.48px;top:249px;font-size:12.4px;color:#545454;letter-spacing:-0.182px;">DOCX</span>
<span class="t " style="left:1089.84px;top:249px;font-size:13.2px;color:#545454;letter-spacing:0.164px;">24</span>
<span class="t " style="left:1202.83px;top:249px;font-size:13.2px;color:#1a6dc2;font-weight:700;letter-spacing:-1.000px;">Bruce</span>
</div>
<div class="clip" style="left:1227px;top:522px;width:14px;height:370px"><div class="b" style="left:4px;top:188px;width:6px;height:200px;border-radius:3px;background:#dcdcdc"></div></div>
<div class="b" style="left:602px;top:455px;width:131px;height:434px;border:3px solid #b83238"></div>
<div class="b" style="left:1246px;top:97.5px;width:6px;height:700px;background:#dcdcdc;border-radius:3px"></div>
<div class="b" style="left:4px;top:893px;width:1252px;height:36px;background:#fff"></div>
<div class="b" style="left:4px;top:892px;width:1252px;height:1px;background:#cfdcea"></div>
<div class="b" style="left:28px;top:897px;width:100px;height:31.5px;background:#fff;border:1px solid #b7c8df;border-radius:3px"></div>
<span class="t " style="left:41.22px;top:902px;font-size:14.2px;color:#555;letter-spacing:-0.220px;">All 7</span>
<svg class="b" style="left:106.5px;top:912px;" width="10" height="6" viewBox="0 0 10 6"><path d="M0.900 0.700h7.800L4.800 4.700z" fill="#222"/></svg>
<div class="b" style="left:138px;top:896.8px;width:150px;height:32px;background:#fff;border:1px solid #1473e6;border-radius:3px"></div>
<div class="b" style="left:256px;top:898px;width:1px;height:30px;background:#bcd6f7"></div>
<span class="t " style="left:154.14px;top:903px;font-size:14.2px;color:#1473e6;letter-spacing:-0.392px;">Export as CSV</span>
<svg class="b" style="left:264px;top:908px;" width="16" height="10" viewBox="0 0 16 10"><path d="M2.200 2.300l5.900 5.300 5.900-5.300" fill="none" stroke="#1473e6" stroke-width="2.100"/></svg>
<svg class="b" style="left:304px;top:904px;" width="17" height="17" viewBox="0 0 17 17"><g fill="none" stroke="#1473e6" stroke-width="1.100" stroke-linecap="round"><path d="M6 12.100H1.700A.9.9 0 0 1 .8 11.200V3.700A.9.9 0 0 1 1.700 2.800H9.400A.9.900 0 0 1 10.300 3.700V7.300"/>
<rect x="2.800" y="1.700" width="2.600" height="5.700" rx="1.200" fill="#fff"/><path d="M2.800 5.500H5.400M7.300 5.600H8.600"/><path d="M2.400 10.900H5.200" stroke="#8cb9f2" stroke-width="2"/>
<circle cx="10.100" cy="11.300" r="3.300" fill="#fff"/><path d="M12.500 13.700l2.600 2.300" stroke-width="1.300"/></g></svg>
<span class="t " style="left:331.26px;top:902px;font-size:14.2px;color:#1473e6;letter-spacing:-0.197px;">Save filter</span>
<span class="t " style="left:1180.69px;top:902px;font-size:14.2px;color:#5b6b83;letter-spacing:0.177px;">Total: 7</span>
</div></div></div>
</body></html>
